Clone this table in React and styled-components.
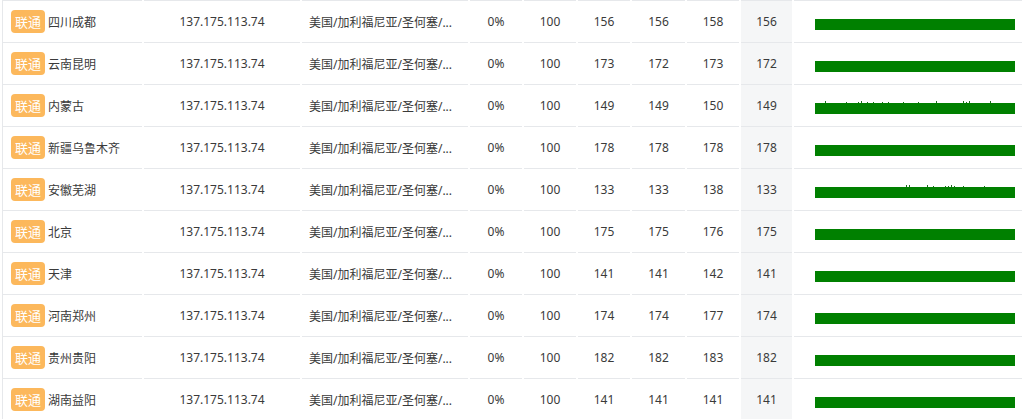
import React from 'react';
import styled, { createGlobalStyle } from 'styled-components';

const GlobalStyle = createGlobalStyle`
  html, body {
    margin: 0;
    padding: 0;
    background: #fff;
  }
  body {
    font-family: "Noto Sans", "Noto Sans CJK SC", sans-serif;
    font-size: 12px;
    color: #333;
  }
`;

const Viewport = styled.div`
  width: 1022px;
  height: 419px;
  overflow: hidden;
`;

const Table = styled.table`
  table-layout: fixed;
  width: 1036px;
  border-collapse: separate;
  border-spacing: 2px 0;
`;

const Col = styled.col`
  width: ${(p) => p.$w}px;
`;

const Row = styled.tr`
  &:first-child td {
    border-top: 1px solid #e6e8eb;
  }
`;

const Cell = styled.td`
  height: 41px;
  padding: 0 ${(p) => p.$pad || 0}px;
  border-bottom: 1px solid #e6e8eb;
  text-align: ${(p) => p.$align || 'center'};
  background: ${(p) => (p.$shaded ? '#f5f6f7' : 'transparent')};
  color: #3a3a3a;
  white-space: nowrap;
  overflow: hidden;
  vertical-align: middle;
  box-sizing: content-box;
`;

const NodeCell = styled(Cell)`
  border-left: 1px solid #e6e8eb;
  padding-left: 8px;
  text-align: left;
`;

const NodeWrap = styled.div`
  display: flex;
  align-items: center;
  gap: 3px;
`;

const Isp = styled.span`
  display: inline-flex;
  align-items: center;
  justify-content: center;
  width: 34px;
  height: 23px;
  border-radius: 4px;
  background: #fcb85c;
  color: #fff;
  font-size: 13px;
`;

const Spark = styled.svg`
  display: block;
`;

const rows = [
  { name: '四川成都', v: [156, 156, 158, 156] },
  { name: '云南昆明', v: [173, 172, 173, 172] },
  { name: '内蒙古', v: [149, 149, 150, 149], jitter: [10, 200] },
  { name: '新疆乌鲁木齐', v: [178, 178, 178, 178] },
  { name: '安徽芜湖', v: [133, 133, 138, 133], jitter: [85, 190] },
  { name: '北京', v: [175, 175, 176, 175] },
  { name: '天津', v: [141, 141, 142, 141] },
  { name: '河南郑州', v: [174, 174, 177, 174] },
  { name: '贵州贵阳', v: [182, 182, 183, 182] },
  { name: '湖南益阳', v: [141, 141, 141, 141] },
];

const widths = [140, 156, 166, 52, 52, 52, 53, 52, 51, 240];

// a few irregular marks on top of the bar where latency wobbled
const ticksFor = (seed, from, to) => {
  const out = [];
  let s = seed;
  for (let x = from; x < to; x += 3) {
    s = (s * 9301 + 49297) % 233280;
    const r = s / 233280;
    if (r > 0.72) out.push({ x, h: r > 0.9 ? 2 : 1 });
  }
  return out;
};

const LatencyBar = ({ seed, jitter }) => {
  const ticks = jitter ? ticksFor(seed, jitter[0], jitter[1]) : [];
  return (
    <Spark width="200" height="16" viewBox="0 0 200 16">
      <rect x="0" y="5" width="200" height="11" fill="#008000" />
      {ticks.map((t) => (
        <rect key={t.x} x={t.x} y={5 - t.h} width="1" height={t.h} fill="#1e6b1e" />
      ))}
    </Spark>
  );
};

const App = () => (
  <Viewport>
    <GlobalStyle />
    <Table>
      <colgroup>
        {widths.map((w, i) => <Col key={i} $w={w} />)}
      </colgroup>
      <tbody>
        {rows.map((r, i) => (
          <Row key={r.name}>
            <NodeCell>
              <NodeWrap>
                <Isp>联通</Isp>
                <span>{r.name}</span>
              </NodeWrap>
            </NodeCell>
            <Cell>137.175.113.74</Cell>
            <Cell $align="left" $pad={7}>美国/加利福尼亚/圣何塞/...</Cell>
            <Cell>0%</Cell>
            <Cell>100</Cell>
            <Cell>{r.v[0]}</Cell>
            <Cell>{r.v[1]}</Cell>
            <Cell>{r.v[2]}</Cell>
            <Cell $shaded>{r.v[3]}</Cell>
            <Cell $align="left" $pad={21}>
              <LatencyBar seed={i * 131 + 7} jitter={r.jitter} />
            </Cell>
          </Row>
        ))}
      </tbody>
    </Table>
  </Viewport>
);

export default App;
